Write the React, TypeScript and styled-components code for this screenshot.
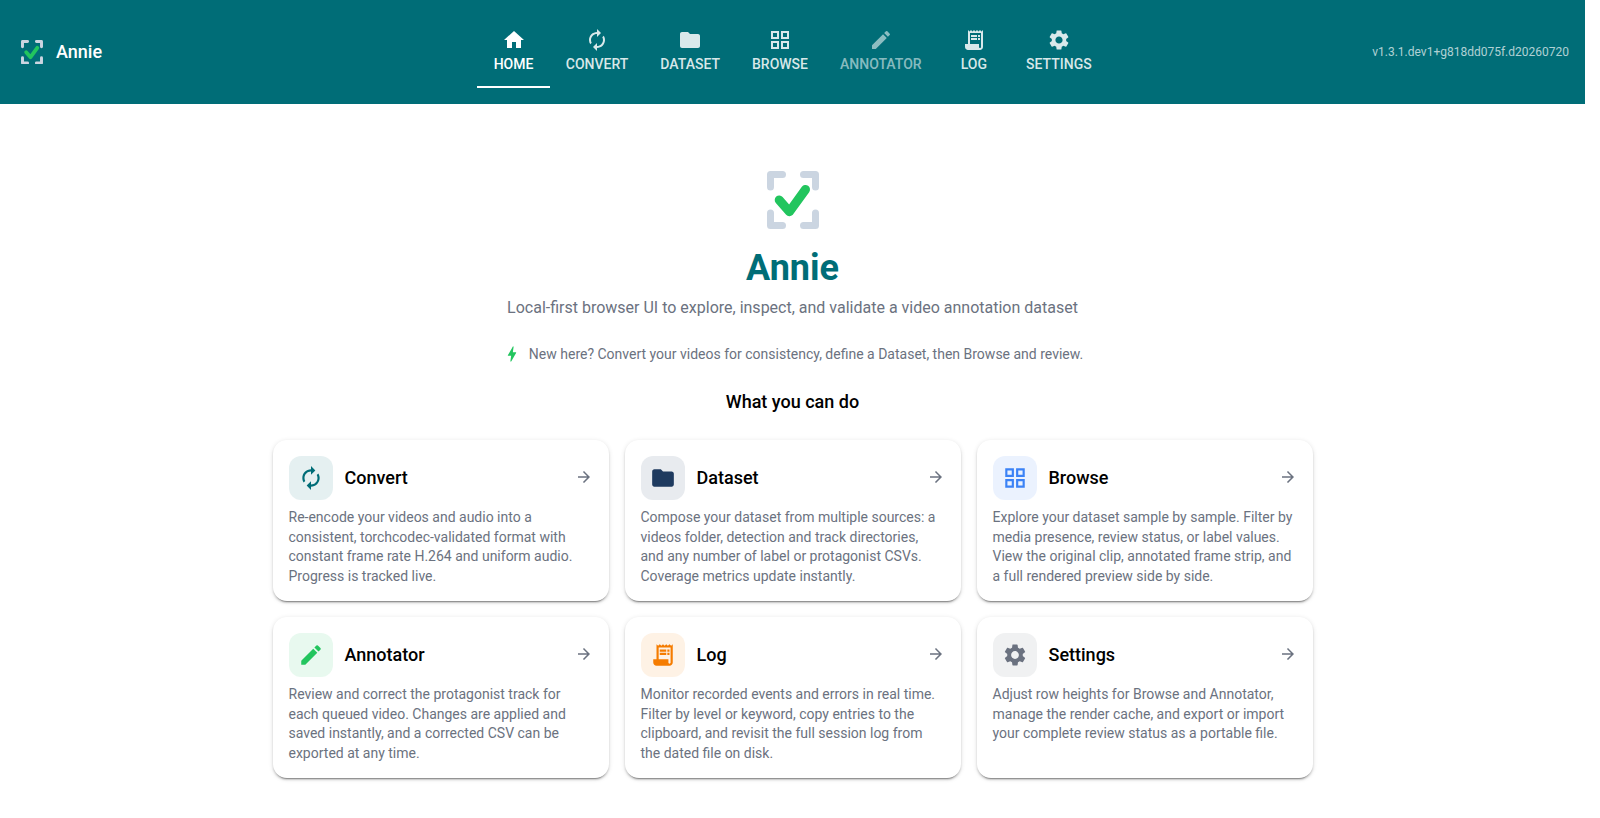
import React from "react";
import styled, { createGlobalStyle } from "styled-components";
import {
    MdHome,
    MdAutorenew,
    MdFolder,
    MdGridView,
    MdEdit,
    MdReceiptLong,
    MdSettings,
    MdArrowForward,
    MdBolt,
} from "react-icons/md";

const teal = "#006d77";

const GlobalStyle = createGlobalStyle`
    html, body {
        margin: 0;
        background: #fff;
    }
    body {
        font-family: Roboto, "Liberation Sans", sans-serif;
        color: #000;
    }
    * {
        box-sizing: border-box;
    }
`;

const Page = styled.div`
    margin-right: 15px;
`;

const Header = styled.header`
    display: grid;
    grid-template-columns: 1fr auto 1fr;
    align-items: center;
    height: 104px;
    padding: 0 16px;
    background: ${teal};
    color: #fff;
`;

const Brand = styled.div`
    display: flex;
    align-items: center;
    gap: 13px;
    padding-left: 5px;
    font-size: 18px;
    font-weight: 500;
    line-height: 22px;

    span {
        margin-top: -1px;
    }
`;

const Tabs = styled.nav`
    display: flex;
`;

const Tab = styled.a<{ $active?: boolean; $dim?: boolean }>`
    display: flex;
    flex-direction: column;
    align-items: center;
    min-width: 72.5px;
    height: 72px;
    padding: 12px 16px 0;
    font-size: 14px;
    font-weight: 500;
    line-height: 17.5px;
    text-transform: uppercase;
    color: ${(p) => (p.$active ? "#fff" : p.$dim ? "rgba(255,255,255,0.55)" : "rgba(255,255,255,0.85)")};
    border-bottom: 2px solid ${(p) => (p.$active ? "#fff" : "transparent")};

    svg {
        display: block;
        margin-bottom: 4px;
        font-size: 24px;
    }
`;

const Version = styled.div`
    justify-self: end;
    font-size: 12px;
    color: rgba(255, 255, 255, 0.7);
`;

const Main = styled.main`
    display: flex;
    flex-direction: column;
    align-items: center;
    padding: 67px 0 40px;
`;

const Title = styled.h1`
    margin: 18px 0 0;
    font-size: 36px;
    font-weight: 700;
    line-height: 43px;
    color: ${teal};
`;

const Subtitle = styled.p`
    margin: 6px 0 0;
    font-size: 16px;
    line-height: 24px;
    color: #6b7280;
`;

const Hint = styled.p`
    display: flex;
    align-items: center;
    gap: 7px;
    margin: 24px 0 0;
    font-size: 14px;
    line-height: 20px;
    color: #6b7280;

    svg {
        font-size: 20px;
        color: #22c55e;
    }
`;

const SectionTitle = styled.h2`
    margin: 24px 0 0;
    font-size: 18px;
    font-weight: 500;
    line-height: 27px;
    color: #000;
`;

const CardGrid = styled.div`
    display: grid;
    grid-template-columns: repeat(3, 336px);
    gap: 16px;
    margin-top: 25px;
`;

const Card = styled.a`
    display: block;
    height: 161px;
    padding: 16px;
    border-radius: 14px;
    background: #fff;
    box-shadow: 0 3px 1px -2px rgba(0, 0, 0, 0.3), 0 2px 2px 0 rgba(0, 0, 0, 0.16), 0 1px 5px 0 rgba(0, 0, 0, 0.12);
`;

const CardHead = styled.div`
    display: flex;
    align-items: center;
    gap: 12px;
    margin-bottom: 8px;

    > svg {
        margin: 0 0 2px auto;
        font-size: 18px;
        color: #6b7280;
    }
`;

const IconBox = styled.div<{ $color: string }>`
    display: flex;
    align-items: center;
    justify-content: center;
    width: 44px;
    height: 44px;
    border-radius: 12px;
    font-size: 26px;
    color: ${(p) => p.$color};
    background: ${(p) => p.$color}1a;
`;

const CardTitle = styled.h3`
    margin: 0 0 1px;
    font-size: 18px;
    font-weight: 500;
    color: #000;
`;

const CardText = styled.p`
    margin: 0;
    font-size: 14px;
    line-height: 19.6px;
    color: #6b7280;
`;

const Logo = ({ width, height }: { width: number; height: number }) => (
    <svg width={width} height={height} viewBox="0 0 52 58" fill="none" strokeLinecap="round" strokeLinejoin="round">
        <path
            d="M3.5 16V3.5H15.5M36.5 3.5H48.5V16M3.5 42V54.5H15.5M36.5 54.5H48.5V42"
            stroke="#cbd5e1"
            strokeWidth="7"
        />
        <path d="M12.2 29L22.5 40.7L38.5 18.5" stroke="#22c55e" strokeWidth="9" />
    </svg>
);

const tabs = [
    { label: "Home", icon: <MdHome />, active: true },
    { label: "Convert", icon: <MdAutorenew /> },
    { label: "Dataset", icon: <MdFolder /> },
    { label: "Browse", icon: <MdGridView /> },
    { label: "Annotator", icon: <MdEdit />, dim: true },
    { label: "Log", icon: <MdReceiptLong /> },
    { label: "Settings", icon: <MdSettings /> },
];

const cards = [
    {
        title: "Convert",
        icon: <MdAutorenew />,
        color: "#006d77",
        text: "Re-encode your videos and audio into a consistent, torchcodec-validated format with constant frame rate H.264 and uniform audio. Progress is tracked live.",
    },
    {
        title: "Dataset",
        icon: <MdFolder />,
        color: "#1e3a5f",
        text: "Compose your dataset from multiple sources: a videos folder, detection and track directories, and any number of label or protagonist CSVs. Coverage metrics update instantly.",
    },
    {
        title: "Browse",
        icon: <MdGridView />,
        color: "#3b82f6",
        text: "Explore your dataset sample by sample. Filter by media presence, review status, or label values. View the original clip, annotated frame strip, and a full rendered preview side by side.",
    },
    {
        title: "Annotator",
        icon: <MdEdit />,
        color: "#22c55e",
        text: "Review and correct the protagonist track for each queued video. Changes are applied and saved instantly, and a corrected CSV can be exported at any time.",
    },
    {
        title: "Log",
        icon: <MdReceiptLong />,
        color: "#f57c00",
        text: "Monitor recorded events and errors in real time. Filter by level or keyword, copy entries to the clipboard, and revisit the full session log from the dated file on disk.",
    },
    {
        title: "Settings",
        icon: <MdSettings />,
        color: "#6b7280",
        text: "Adjust row heights for Browse and Annotator, manage the render cache, and export or import your complete review status as a portable file.",
    },
];

export default function App() {
    return (
        <Page>
            <GlobalStyle />
            <Header>
                <Brand>
                    <Logo width={22} height={24.5} />
                    <span>Annie</span>
                </Brand>
                <Tabs>
                    {tabs.map((tab) => (
                        <Tab key={tab.label} $active={tab.active} $dim={tab.dim}>
                            {tab.icon}
                            {tab.label}
                        </Tab>
                    ))}
                </Tabs>
                <Version>v1.3.1.dev1+g818dd075f.d20260720</Version>
            </Header>
            <Main>
                <Logo width={52} height={58} />
                <Title>Annie</Title>
                <Subtitle>Local-first browser UI to explore, inspect, and validate a video annotation dataset</Subtitle>
                <Hint>
                    <MdBolt />
                    New here? Convert your videos for consistency, define a Dataset, then Browse and review.
                </Hint>
                <SectionTitle>What you can do</SectionTitle>
                <CardGrid>
                    {cards.map((card) => (
                        <Card key={card.title}>
                            <CardHead>
                                <IconBox $color={card.color}>{card.icon}</IconBox>
                                <CardTitle>{card.title}</CardTitle>
                                <MdArrowForward />
                            </CardHead>
                            <CardText>{card.text}</CardText>
                        </Card>
                    ))}
                </CardGrid>
            </Main>
        </Page>
    );
}
